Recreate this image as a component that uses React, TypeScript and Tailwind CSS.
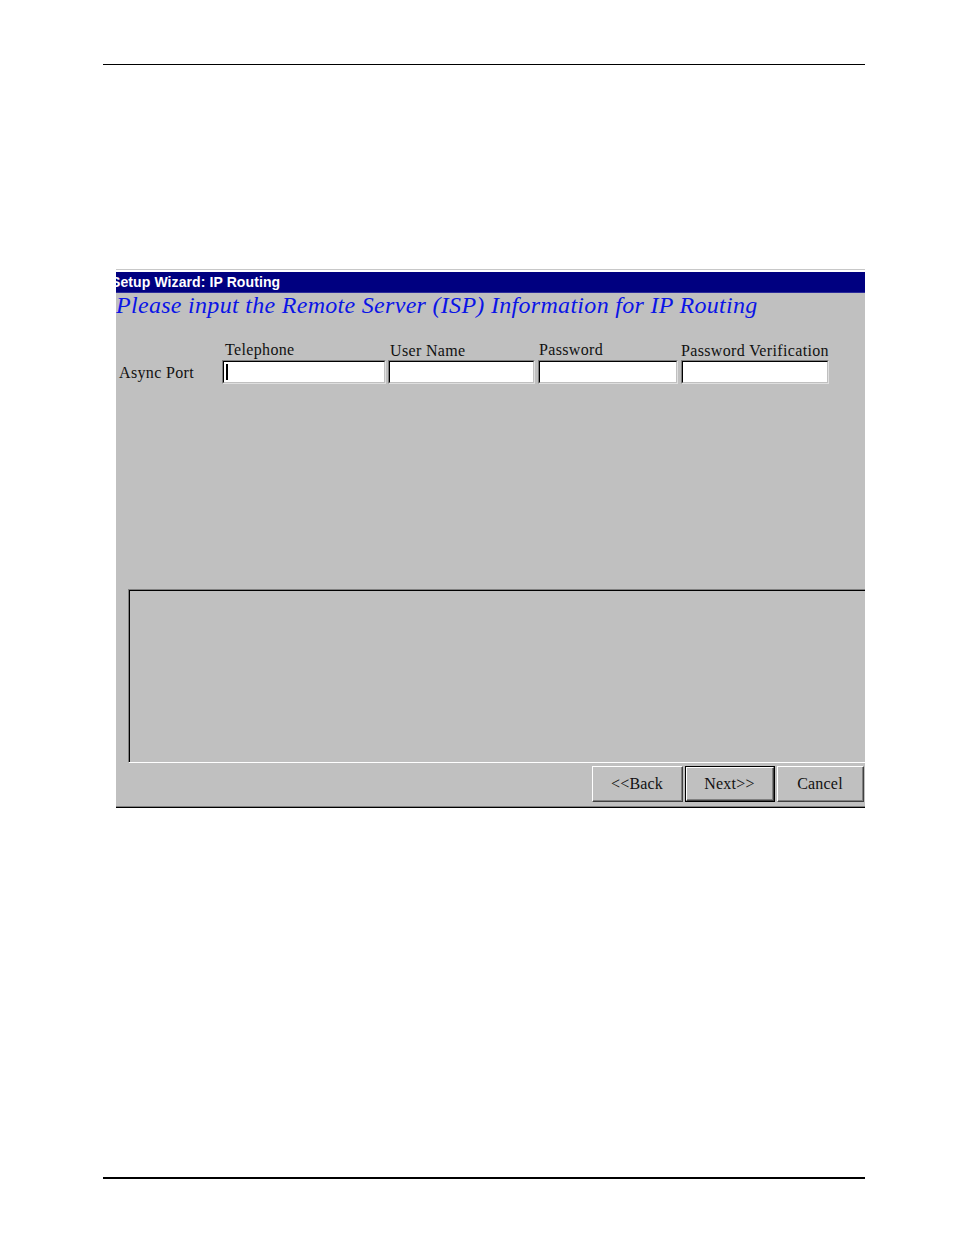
import React from "react";

const serif = { fontFamily: '"Liberation Serif", "Times New Roman", serif' };

function Field({ label, width, labelPad, labelMb, cursor }: { label: string; width: number; labelPad: number; labelMb: number; cursor?: boolean }) {
  return (
    <div className="flex flex-col justify-end" style={{ width }}>
      <div className="text-[16px] leading-[18px] tracking-[0.35px] text-[#111] whitespace-nowrap" style={{ paddingLeft: labelPad, marginBottom: labelMb, ...serif }}>
        {label}
      </div>
      <div className="h-[24px] border-t border-l border-[#808080] border-r border-b border-r-[#dfdfdf] border-b-[#dfdfdf]">
        <div className="h-full border-t border-l border-black border-r border-b border-r-[#c0c0c0] border-b-[#c0c0c0] bg-white flex items-center pl-[2px]">
          {cursor ? <div className="w-[2px] h-[16px] bg-black" /> : null}
        </div>
      </div>
    </div>
  );
}

function Btn({ label, width, isDefault }: { label: string; width: number; isDefault?: boolean }) {
  const inner = (
    <div className="h-full border-t border-l border-white border-r border-b border-r-[#404040] border-b-[#404040]">
      <div className="h-full border-r border-b border-[#808080] border-t-0 border-l-0 flex items-center justify-center text-[16px] tracking-[0.2px] text-[#111]" style={serif}>
        {label}
      </div>
    </div>
  );
  return (
    <div className={isDefault ? "h-[36px] border border-black" : "h-[36px]"} style={{ width }}>
      {inner}
    </div>
  );
}

export default function App() {
  return (
    <div className="bg-white w-[954px] h-[1235px] overflow-hidden relative">
      <div className="pt-[64px] pl-[103px]">
        <div className="w-[762px] h-px bg-black" />
      </div>
      {/* Dialog */}
      <div className="ml-[116px] mt-[204px] w-[749px] overflow-hidden">
        <div className="h-px bg-[#c8c8c8]" />
        <div className="h-[2px] bg-white" />
        <div className="bg-[#c0c0c0]">
          <div className="h-[21px] bg-[#000080] border-b border-[#2a2a9a] flex items-center overflow-hidden">
            <span className="ml-[-5px] text-white font-bold text-[14px] tracking-[0.1px] leading-none whitespace-nowrap" style={{ fontFamily: '"Liberation Sans", Arial, sans-serif' }}>
              Setup Wizard: IP Routing
            </span>
          </div>
          <div className="h-[36px] text-[24px] leading-[24px] tracking-[0.3px] italic text-[#0a14e6] whitespace-nowrap" style={serif}>
            Please input the Remote Server (ISP) Information for IP Routing
          </div>
          <div className="flex items-end h-[55px]">
            <div className="w-[106px] pl-[3px] pb-[1px] text-[16px] leading-[20px] tracking-[0.35px] text-[#111]" style={serif}>
              Async Port
            </div>
            <div className="flex items-stretch h-full">
              <Field label="Telephone" width={164} labelPad={3} labelMb={1} cursor />
              <div className="w-[2px]" />
              <Field label="User Name" width={147} labelPad={2} labelMb={0} />
              <div className="w-[3px]" />
              <Field label="Password" width={140} labelPad={1} labelMb={1} />
              <div className="w-[3px]" />
              <Field label="Password Verification" width={148} labelPad={0} labelMb={0} />
            </div>
          </div>
          <div className="h-[205px]" />
          <div className="ml-[12px] w-[760px] h-[174px] border-t border-l border-[#808080] border-b border-b-white">
            <div className="h-full border-t border-l border-black" />
          </div>
          <div className="flex justify-end gap-[2px] pr-[1px] mt-[3px]">
            <Btn label="<<Back" width={91} />
            <Btn label="Next>>" width={90} isDefault />
            <Btn label="Cancel" width={87} />
          </div>
          <div className="h-[4px]" />
          <div className="h-px bg-[#808080]" />
          <div className="h-px bg-black" />
        </div>
      </div>
      <div className="absolute left-[103px] top-[1177px] w-[762px] h-[2px] bg-black" />
    </div>
  );
}
